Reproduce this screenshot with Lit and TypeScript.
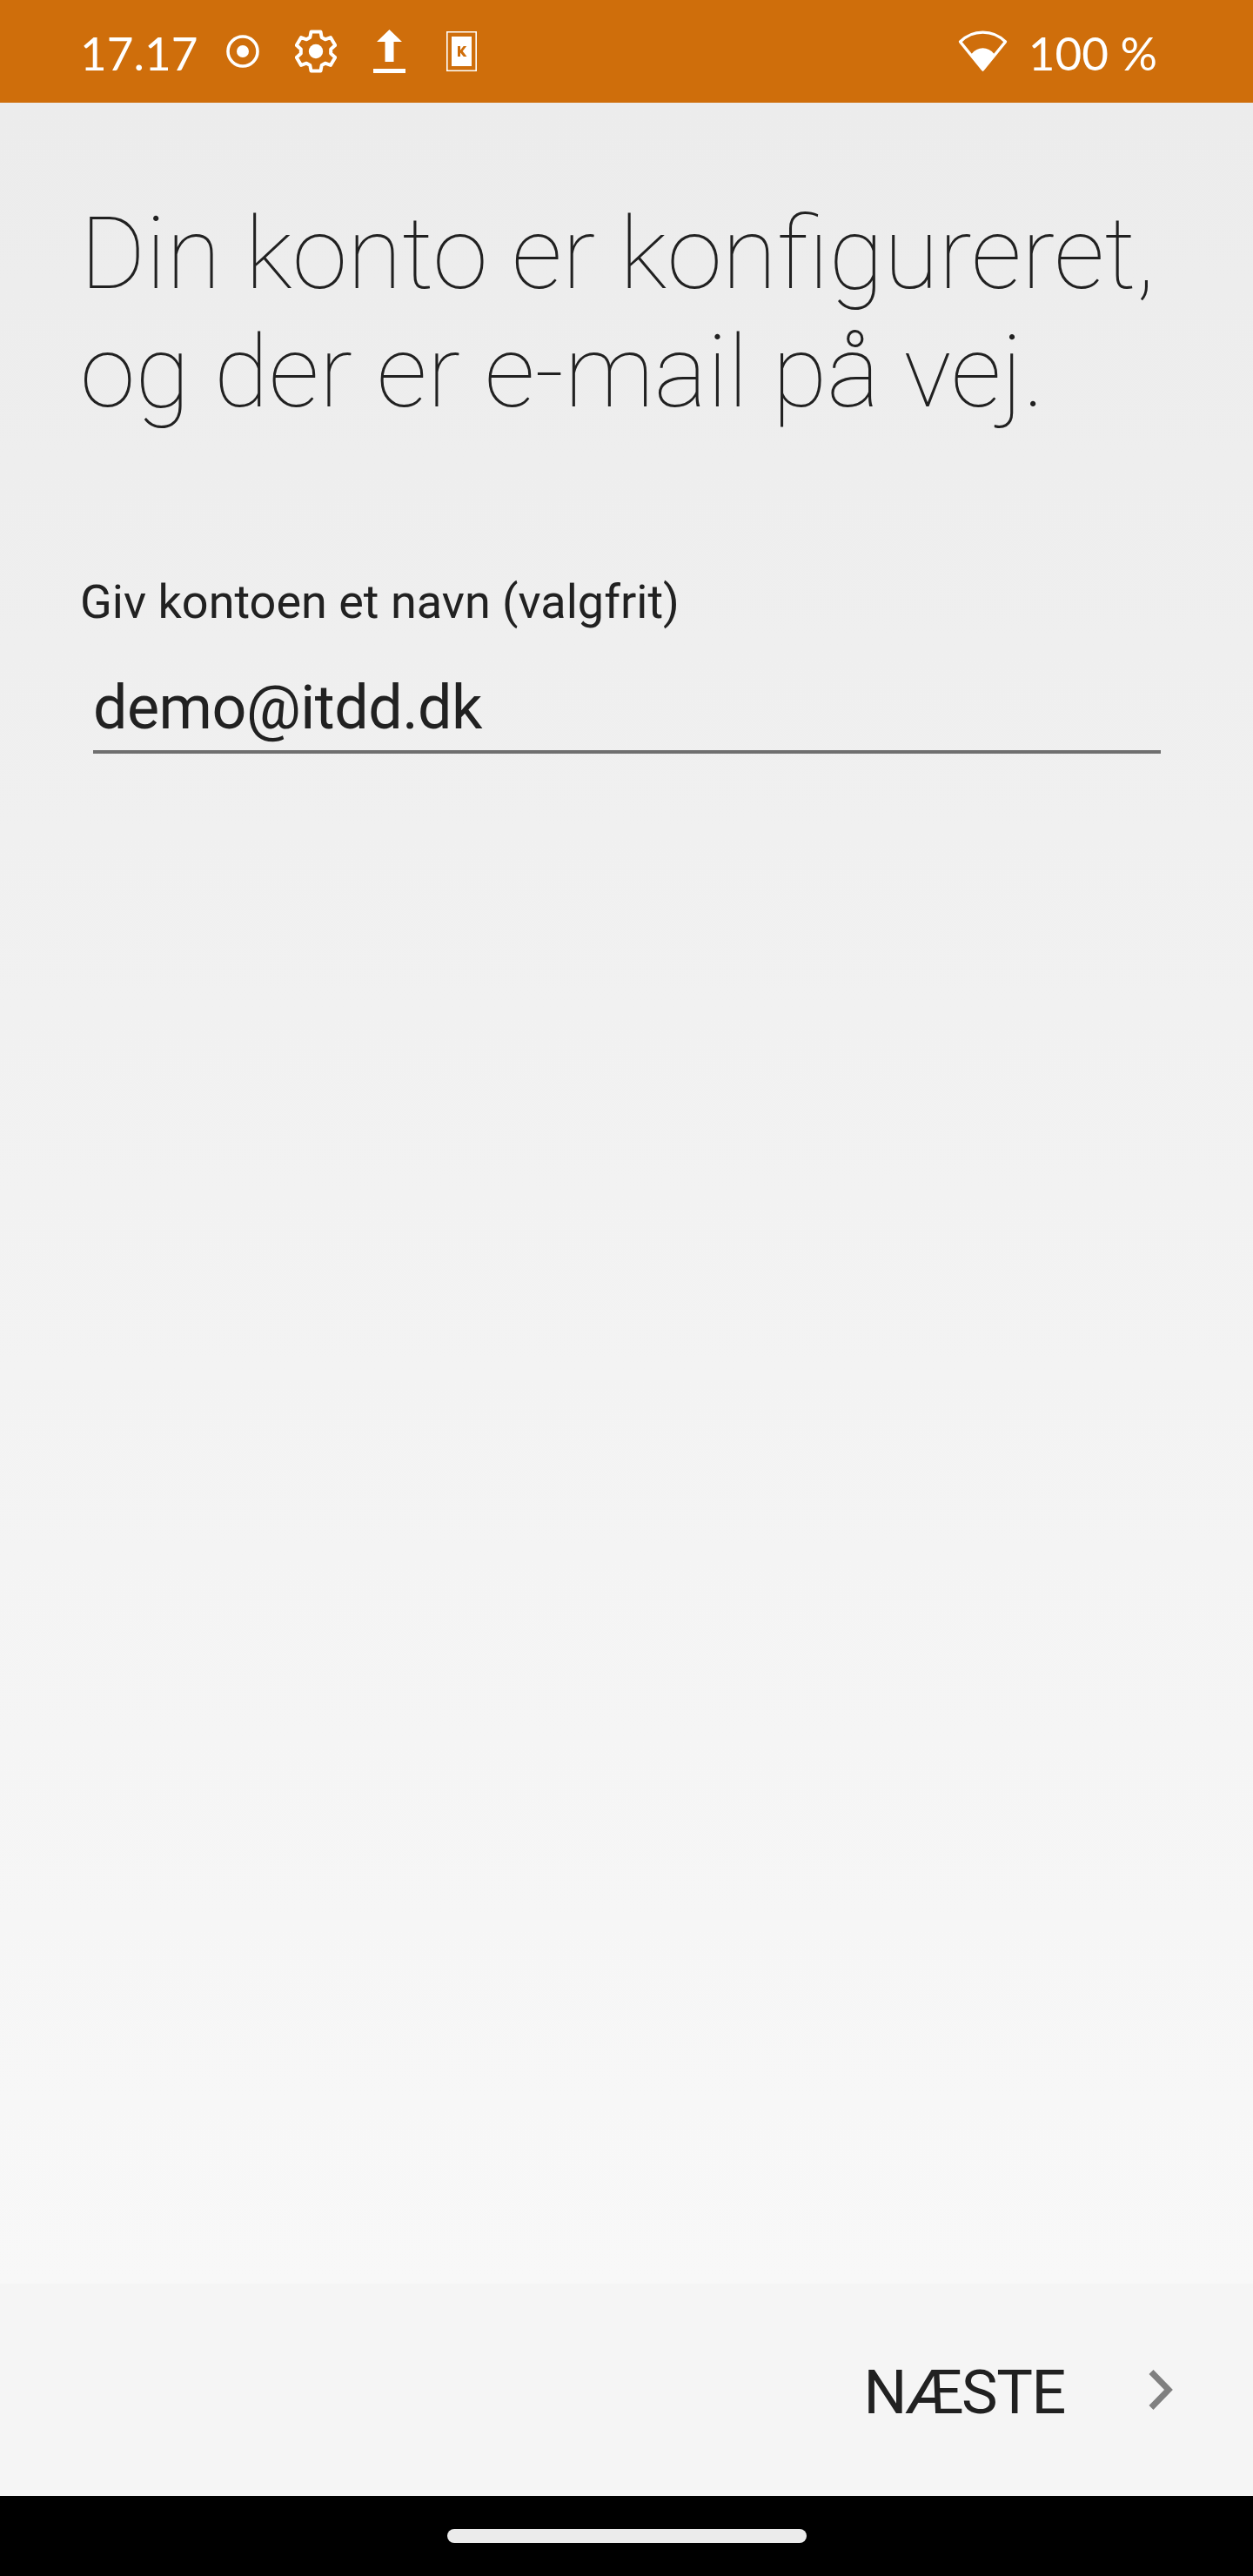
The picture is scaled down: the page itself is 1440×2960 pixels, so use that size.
import {LitElement, html, css} from 'lit';
import {customElement} from 'lit/decorators.js';

@customElement('app-root')
export class AppRoot extends LitElement {
  render() {
    return html`
      <div class="screen">
        <header class="status">
          <div class="status-left">
            <span class="time">17.17</span>
            <svg class="ic-record" width="38" height="38" viewBox="0 0 38 38">
              <circle cx="19" cy="19" r="17" fill="none" stroke="#fff" stroke-width="3.600"/>
              <circle cx="19" cy="19" r="7" fill="#fff"/>
            </svg>
            <svg class="ic-gear" width="48" height="50" viewBox="0 0 48 50">
              <path fill="none" stroke="#fff" stroke-width="4" stroke-linejoin="round" d="M18.500 2.500h11l1.200 6.500 4 2.300 6.200-2.200 5.300 9-5 4.300v5.200l5 4.300-5.300 9-6.200-2.200-4 2.300-1.200 6.500h-11l-1.200-6.500-4-2.300-6.200 2.200-5.300-9 5-4.300v-5.200l-5-4.300 5.300-9 6.200 2.200 4-2.300z"/>
              <circle cx="24" cy="25" r="8.200" fill="#fff"/>
            </svg>
            <svg class="ic-upload" width="37" height="50" viewBox="0 0 37 50">
              <path fill="#fff" d="M18.500 0l14.500 14H23.500v23h-10V14H4z"/>
              <rect y="45" width="37" height="5" fill="#fff"/>
            </svg>
            <svg class="ic-sim" width="35" height="46" viewBox="0 0 35 46">
              <path fill="none" stroke="#fff" stroke-width="1.600" d="M.8.800h33.400v44.400H.8z"/>
              <path fill="#fff" fill-rule="evenodd" d="M6 6h23v34H6zM13 17v12h3v-4.500l3.800 4.500h3.700l-4.800-6.200 4.500-5.800h-3.500l-3.700 4.800V17z"/>
            </svg>
          </div>
          <div class="status-right">
            <svg class="ic-wifi" width="57" height="48" viewBox="0 0 57 48">
              <path fill="none" stroke="#fff" stroke-width="3.400" stroke-linejoin="round" d="M2.500 13C17 -1.500 40 -1.500 54.500 13L28.500 45z"/>
              <path fill="#fff" d="M15.500 27c7-9 19-9 26 0L28.500 47z"/>
            </svg>
            <span class="battery">100 %</span>
          </div>
        </header>
        <main class="content">
          <h1 class="title">Din konto er konfigureret,<br />og der er e-mail på vej.</h1>
          <label class="label">Giv kontoen et navn (valgfrit)</label>
          <div class="field">demo@itdd.dk</div>
          <div class="footer">
            <span class="next">NÆSTE</span>
            <svg class="chevron" width="28" height="46" viewBox="0 0 28 46">
              <path fill="none" stroke="#808080" stroke-width="7" d="M3 2.500L23 23 3 43.500"/>
            </svg>
          </div>
        </main>
        <nav class="navbar"><div class="pill"></div></nav>
      </div>
    `;
  }

  static styles = css`
    :host {
      display: block;
    }
    .screen {
      display: flex;
      flex-direction: column;
      width: 1440px;
      height: 2960px;
      font-family: Roboto, sans-serif;
      color: #212121;
    }
    .status {
      display: flex;
      flex: none;
      height: 118px;
      align-items: center;
      justify-content: space-between;
      padding: 0 110px 0 92px;
      background: #cf6e0b;
      color: #fff;
      font-family: Lato, sans-serif;
      font-size: 53px;
      box-sizing: border-box;
    }
    .status-left,
    .status-right {
      display: flex;
      align-items: center;
    }
    .time {
      width: 168px;
      padding-top: 3px;
    }
    .ic-gear {
      margin-left: 41px;
    }
    .ic-upload {
      margin-left: 42px;
    }
    .ic-sim {
      margin-left: 47px;
    }
    .battery {
      margin-left: 24px;
      padding-top: 3px;
    }
    .content {
      display: flex;
      flex: 1;
      flex-direction: column;
      background: linear-gradient(#ececec, #f8f8f8 2506px, #f5f5f5 2506px);
      padding: 106px 106px 0 92px;
    }
    .title {
      margin: 0;
      font-size: 115px;
      font-weight: 100;
      line-height: 136px;
      white-space: nowrap;
      color: #212121;
    }
    .label {
      margin-top: 163px;
      font-size: 54px;
      line-height: 66px;
    }
    .field {
      margin: 44px 0 0 15px;
      padding-bottom: 5px;
      font-size: 70px;
      line-height: 88px;
      letter-spacing: -0.5px;
      border-bottom: 4px solid #6f6f6f;
    }
    .footer {
      display: flex;
      align-items: flex-start;
      justify-content: flex-end;
      margin-top: auto;
      margin-right: -14px;
      padding-bottom: 78px;
    }
    .next {
      font-size: 70px;
      line-height: 82px;
      letter-spacing: -1.4px;
    }
    .chevron {
      margin: 15px 0 0 96px;
    }
    .navbar {
      display: flex;
      flex: none;
      height: 92px;
      align-items: center;
      justify-content: center;
      background: #000;
    }
    .pill {
      width: 413px;
      height: 16px;
      border-radius: 8px;
      background: #ebebeb;
    }
  `;
}

declare global {
  interface HTMLElementTagNameMap {
    'app-root': AppRoot;
  }
}
